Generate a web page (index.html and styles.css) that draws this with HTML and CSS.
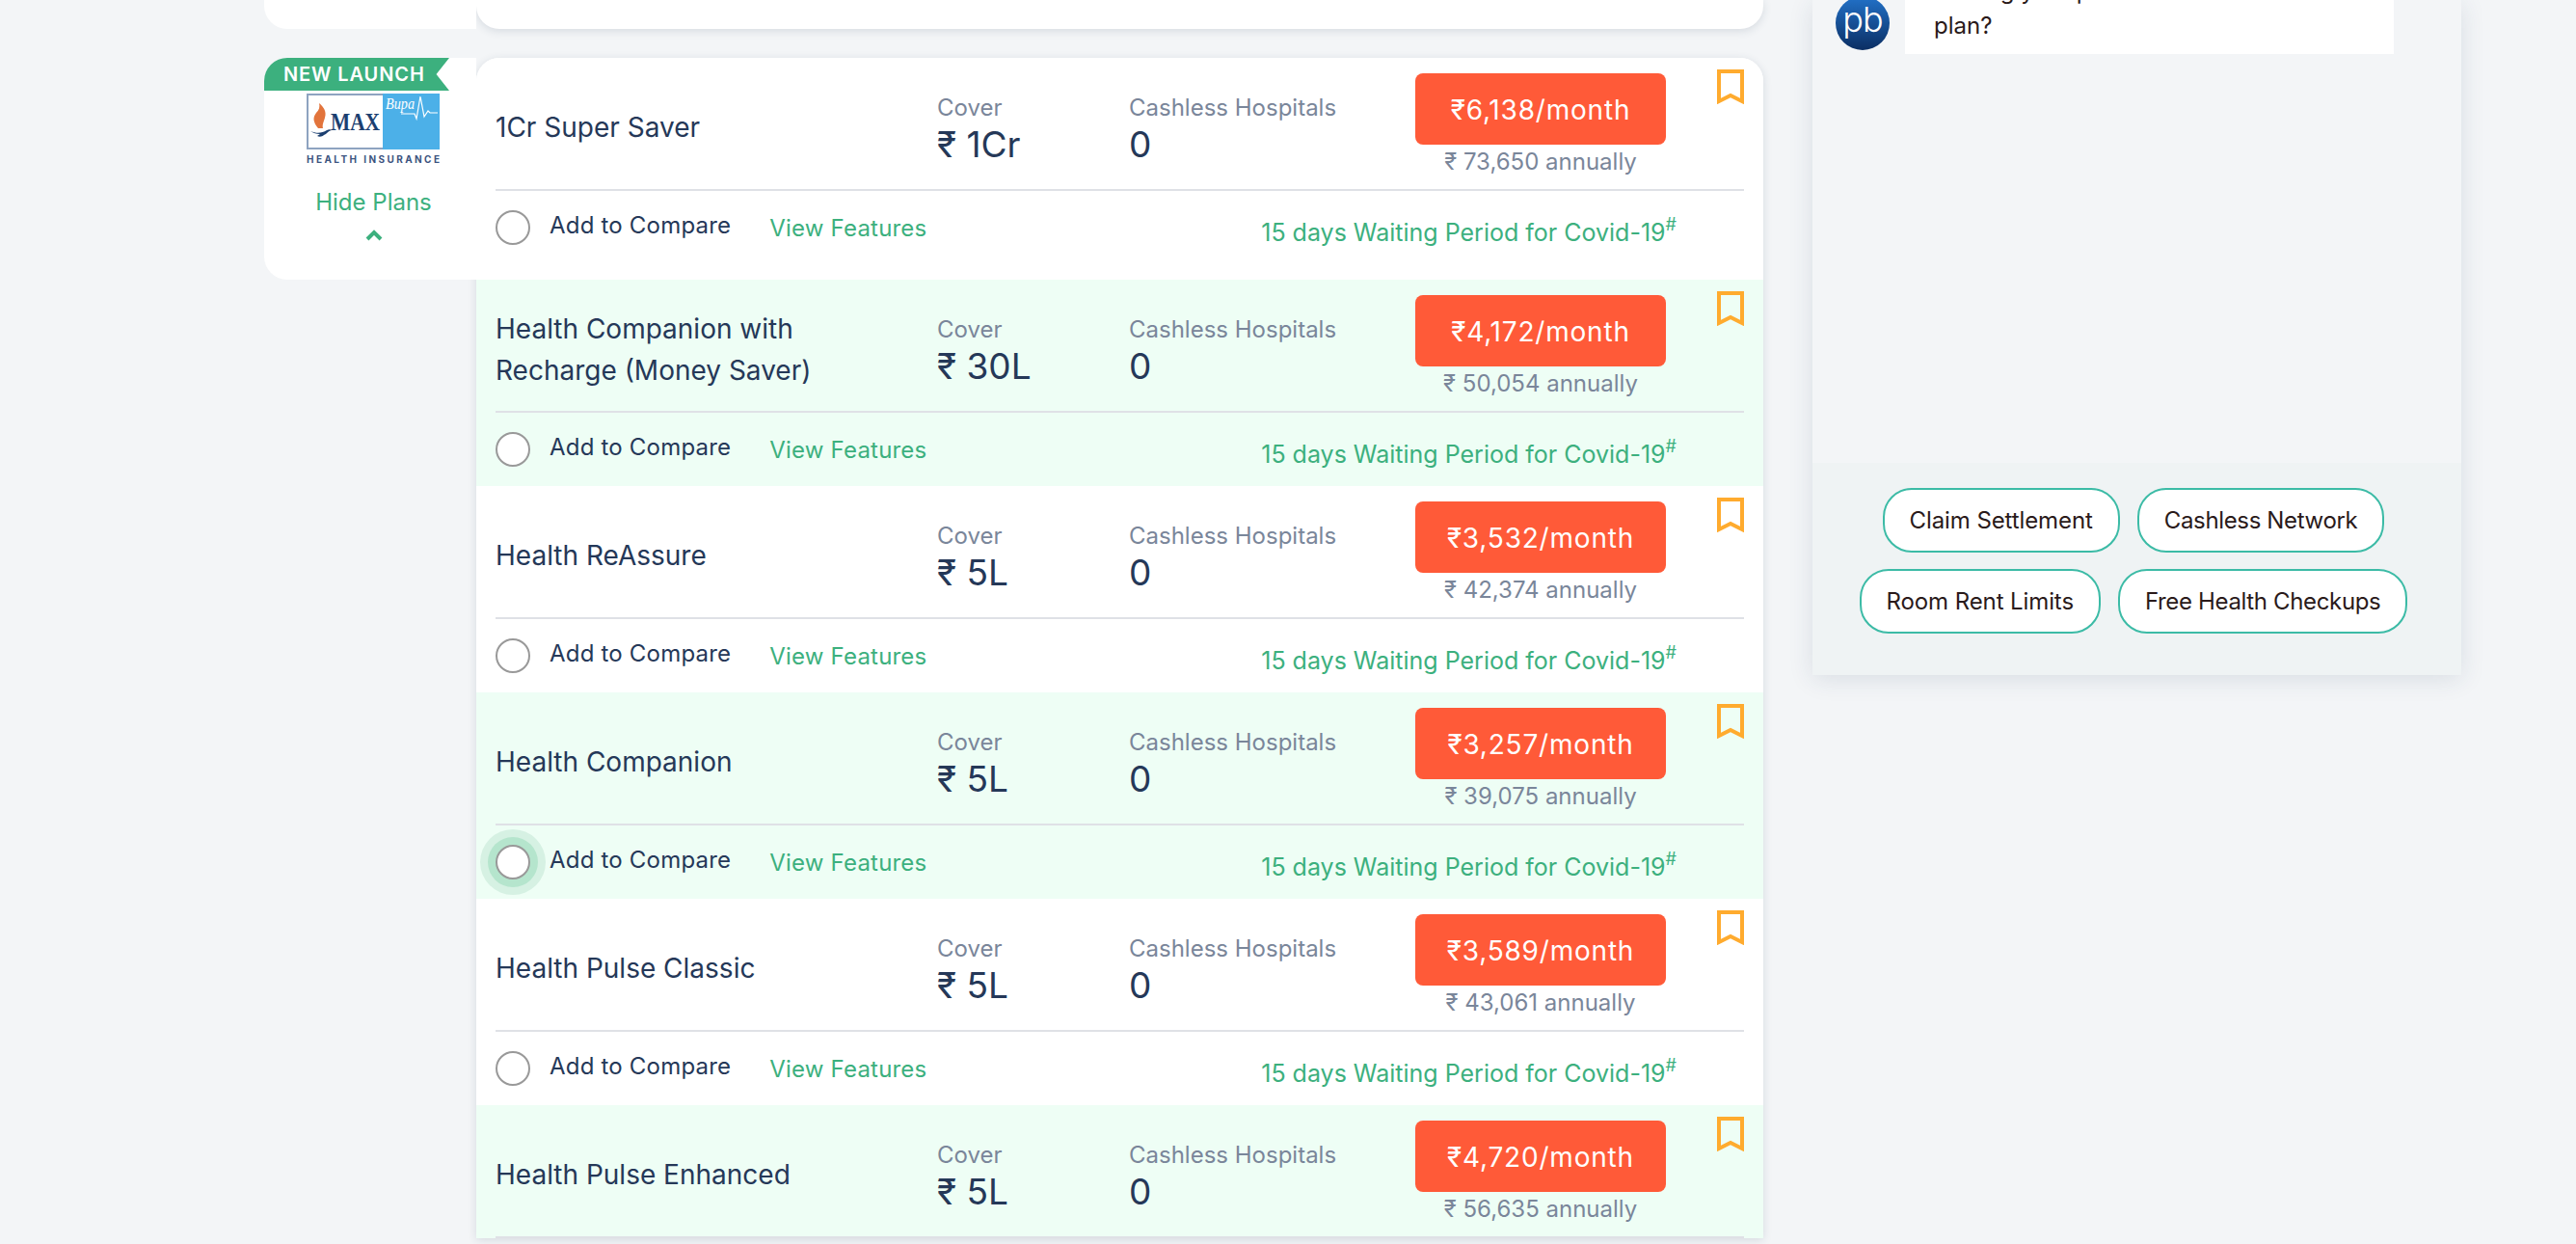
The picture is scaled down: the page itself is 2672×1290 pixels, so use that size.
FILE: index.html
```html
<!DOCTYPE html>
<html lang="en">
  <head>
    <meta charset="UTF-8" />
    <title>Health Insurance Plans</title>
    <link rel="stylesheet" href="styles.css">
  </head>
  <body>
    <div class="page">
      <div class="results">
        <div class="plan-group prev-group">
          <div class="insurer-panel"></div>
          <div class="plan-list"></div>
        </div>

        <div class="plan-group">
          <div class="insurer-panel">
            <div class="launch-tag">NEW LAUNCH</div>
            <svg class="insurer-logo" width="138" height="73" viewBox="0 0 138 73">
              <rect x="1" y="1" width="79" height="56" fill="#fff" stroke="#8ea3c0" stroke-width="2"/>
              <rect x="79" y="0" width="59" height="58" fill="#4cb0e8"/>
              <path d="M12 36c-5-6-6-11-2-16 3-3 4-6 3-10 5 4 8 9 6 15-1 4-3 7-2 11z" fill="#e2743c"/>
              <path d="M4 39c7 3 12 2 17-1 2-1 4-1 5 0-4 1-5 4-8 5-2 2-5 2-7 1l3-2c-4 0-7-1-10-3z" fill="#1c3f70"/>
              <text x="25" y="38" textLength="51" lengthAdjust="spacingAndGlyphs" class="logo-max">MAX</text>
              <text x="82" y="16" textLength="30" lengthAdjust="spacingAndGlyphs" class="logo-bupa">Bupa</text>
              <path d="M98 21h14l2 5 4-23 4 21 4-6 2 2h8" fill="none" stroke="#fff" stroke-width="1.2"/>
              <text x="0" y="72" textLength="138" class="logo-health">HEALTH INSURANCE</text>
            </svg>
            <div class="hide-plans">Hide Plans</div>
            <svg class="hide-chevron" width="18" height="12" viewBox="0 0 18 12">
              <path d="M2 10l7-7 7 7" fill="none" stroke="#3cb07e" stroke-width="4"/>
            </svg>
          </div>

          <div class="plan-list">
            <div class="plan-row">
              <div class="plan-top">
                <div class="plan-name">1Cr Super Saver</div>
                <div class="plan-cover"><span class="stat-label">Cover</span><span class="stat-value">₹ 1Cr</span></div>
                <div class="plan-cash"><span class="stat-label">Cashless Hospitals</span><span class="stat-value">0</span></div>
                <div class="plan-price"><button class="price-btn">₹6,138/month</button><span class="annual">₹ 73,650 annually</span></div>
                <svg class="bookmark" width="28" height="36" viewBox="0 0 28 36"><path d="M2 2h24v31l-12-6-12 6z" fill="none" stroke="#ffab2e" stroke-width="4"/></svg>
              </div>
              <div class="plan-bottom">
                <span class="radio"></span>
                <span class="compare">Add to Compare</span>
                <span class="features">View Features</span>
                <span class="waiting">15 days Waiting Period for Covid-19<sup>#</sup></span>
              </div>
            </div>

            <div class="plan-row green">
              <div class="plan-top">
                <div class="plan-name">Health Companion with Recharge (Money Saver)</div>
                <div class="plan-cover"><span class="stat-label">Cover</span><span class="stat-value">₹ 30L</span></div>
                <div class="plan-cash"><span class="stat-label">Cashless Hospitals</span><span class="stat-value">0</span></div>
                <div class="plan-price"><button class="price-btn">₹4,172/month</button><span class="annual">₹ 50,054 annually</span></div>
                <svg class="bookmark" width="28" height="36" viewBox="0 0 28 36"><path d="M2 2h24v31l-12-6-12 6z" fill="none" stroke="#ffab2e" stroke-width="4"/></svg>
              </div>
              <div class="plan-bottom">
                <span class="radio"></span>
                <span class="compare">Add to Compare</span>
                <span class="features">View Features</span>
                <span class="waiting">15 days Waiting Period for Covid-19<sup>#</sup></span>
              </div>
            </div>

            <div class="plan-row">
              <div class="plan-top">
                <div class="plan-name">Health ReAssure</div>
                <div class="plan-cover"><span class="stat-label">Cover</span><span class="stat-value">₹ 5L</span></div>
                <div class="plan-cash"><span class="stat-label">Cashless Hospitals</span><span class="stat-value">0</span></div>
                <div class="plan-price"><button class="price-btn">₹3,532/month</button><span class="annual">₹ 42,374 annually</span></div>
                <svg class="bookmark" width="28" height="36" viewBox="0 0 28 36"><path d="M2 2h24v31l-12-6-12 6z" fill="none" stroke="#ffab2e" stroke-width="4"/></svg>
              </div>
              <div class="plan-bottom">
                <span class="radio"></span>
                <span class="compare">Add to Compare</span>
                <span class="features">View Features</span>
                <span class="waiting">15 days Waiting Period for Covid-19<sup>#</sup></span>
              </div>
            </div>

            <div class="plan-row green">
              <div class="plan-top">
                <div class="plan-name">Health Companion</div>
                <div class="plan-cover"><span class="stat-label">Cover</span><span class="stat-value">₹ 5L</span></div>
                <div class="plan-cash"><span class="stat-label">Cashless Hospitals</span><span class="stat-value">0</span></div>
                <div class="plan-price"><button class="price-btn">₹3,257/month</button><span class="annual">₹ 39,075 annually</span></div>
                <svg class="bookmark" width="28" height="36" viewBox="0 0 28 36"><path d="M2 2h24v31l-12-6-12 6z" fill="none" stroke="#ffab2e" stroke-width="4"/></svg>
              </div>
              <div class="plan-bottom">
                <span class="radio hovered"></span>
                <span class="compare">Add to Compare</span>
                <span class="features">View Features</span>
                <span class="waiting">15 days Waiting Period for Covid-19<sup>#</sup></span>
              </div>
            </div>

            <div class="plan-row">
              <div class="plan-top">
                <div class="plan-name">Health Pulse Classic</div>
                <div class="plan-cover"><span class="stat-label">Cover</span><span class="stat-value">₹ 5L</span></div>
                <div class="plan-cash"><span class="stat-label">Cashless Hospitals</span><span class="stat-value">0</span></div>
                <div class="plan-price"><button class="price-btn">₹3,589/month</button><span class="annual">₹ 43,061 annually</span></div>
                <svg class="bookmark" width="28" height="36" viewBox="0 0 28 36"><path d="M2 2h24v31l-12-6-12 6z" fill="none" stroke="#ffab2e" stroke-width="4"/></svg>
              </div>
              <div class="plan-bottom">
                <span class="radio"></span>
                <span class="compare">Add to Compare</span>
                <span class="features">View Features</span>
                <span class="waiting">15 days Waiting Period for Covid-19<sup>#</sup></span>
              </div>
            </div>

            <div class="plan-row green">
              <div class="plan-top">
                <div class="plan-name">Health Pulse Enhanced</div>
                <div class="plan-cover"><span class="stat-label">Cover</span><span class="stat-value">₹ 5L</span></div>
                <div class="plan-cash"><span class="stat-label">Cashless Hospitals</span><span class="stat-value">0</span></div>
                <div class="plan-price"><button class="price-btn">₹4,720/month</button><span class="annual">₹ 56,635 annually</span></div>
                <svg class="bookmark" width="28" height="36" viewBox="0 0 28 36"><path d="M2 2h24v31l-12-6-12 6z" fill="none" stroke="#ffab2e" stroke-width="4"/></svg>
              </div>
            </div>
          </div>
        </div>
      </div>

      <aside class="chat">
        <div class="chat-log">
          <div class="chat-msg">
            <div class="avatar">pb</div>
            <div class="bubble">Finding your perfect<br>plan?</div>
          </div>
        </div>
        <div class="chips">
          <div class="chip-row">
            <span class="chip">Claim Settlement</span>
            <span class="chip narrow">Cashless Network</span>
          </div>
          <div class="chip-row">
            <span class="chip">Room Rent Limits</span>
            <span class="chip narrow">Free Health Checkups</span>
          </div>
        </div>
      </aside>
    </div>
  </body>
</html>
```

FILE: styles.css
```css
html, body {
  height: 100%;
}
body {
  margin: 0;
  overflow: hidden;
  background: #f3f5f7;
  font-family: Inter, "Noto Sans", sans-serif;
  color: #253858;
}
.page {
  display: flex;
  align-items: flex-start;
  height: 1290px;
  padding-left: 274px;
  overflow: hidden;
}
.results {
  width: 1555px;
}

/* groups */
.plan-group {
  display: flex;
  align-items: flex-start;
  margin-bottom: 30px;
}
.insurer-panel {
  position: relative;
  flex: none;
  width: 220px;
  height: 230px;
  box-sizing: border-box;
  padding-top: 37px;
  text-align: center;
  background: #fff;
  border-radius: 24px 0 0 24px;
}
.plan-list {
  flex: 1;
  overflow: hidden;
  background: #fff;
  border-radius: 24px 24px 0 0;
  box-shadow: 0 2px 10px rgba(37, 56, 88, 0.14);
}
.prev-group .insurer-panel {
  height: 30px;
  padding: 0;
  border-radius: 0 0 0 24px;
}
.prev-group .plan-list {
  height: 30px;
  border-radius: 0 0 24px 24px;
}

/* insurer */
.launch-tag {
  position: absolute;
  left: 0;
  top: 0;
  width: 192px;
  height: 34px;
  box-sizing: border-box;
  padding: 0 0 0 20px;
  line-height: 34px;
  text-align: left;
  font-size: 20px;
  font-weight: 600;
  letter-spacing: 0.9px;
  color: #fff;
  background: #3cb07e;
  border-radius: 24px 0 0 0;
  clip-path: polygon(0 0, 100% 0, 93% 50%, 100% 100%, 0 100%);
}
.insurer-logo {
  display: block;
  margin-left: 44px;
}
.logo-max {
  font-family: "Liberation Serif", serif;
  font-size: 26px;
  font-weight: 700;
  fill: #1c3f70;
}
.logo-bupa {
  font-family: "Liberation Serif", serif;
  font-size: 16px;
  font-style: italic;
  fill: #fff;
}
.logo-health {
  font-size: 10px;
  font-weight: 700;
  fill: #3c5480;
}
.hide-plans {
  margin-top: 26px;
  padding-left: 7px;
  font-size: 24px;
  line-height: 27px;
  color: #3cb07e;
}
.hide-chevron {
  display: block;
  margin: 15px auto 0;
  padding-left: 7px;
}

/* plan rows */
.plan-row {
  background: #fff;
}
.plan-row:first-child {
  padding-bottom: 16px;
}
.plan-row.green {
  background: #eefef5;
}
.plan-top {
  display: flex;
  align-items: flex-start;
  height: 136px;
  margin: 0 20px;
  border-bottom: 2px solid #dfe1e6;
}
.plan-name {
  flex: none;
  align-self: center;
  box-sizing: border-box;
  width: 458px;
  padding: 9px 40px 0 0;
  font-size: 28px;
  line-height: 43px;
}
.plan-cover, .plan-cash {
  flex: none;
  display: flex;
  flex-direction: column;
  padding-top: 37px;
}
.plan-cover {
  width: 199px;
}
.plan-cash {
  width: 297px;
}
.stat-label {
  font-size: 24px;
  line-height: 30px;
  color: #7a869a;
}
.stat-value {
  margin-top: 3px;
  font-size: 37px;
  line-height: 40px;
}
.plan-price {
  flex: none;
  display: flex;
  flex-direction: column;
  align-items: center;
  width: 260px;
  padding-top: 16px;
}
.price-btn {
  width: 260px;
  height: 74px;
  padding-top: 2px;
  border: none;
  border-radius: 8px;
  font-family: inherit;
  font-size: 28px;
  letter-spacing: 0.8px;
  color: #fff;
  background: #ff5a38;
}
.annual {
  margin-top: 4px;
  font-size: 24px;
  line-height: 28px;
  color: #7a869a;
}
.bookmark {
  margin: 12px 0 0 auto;
}
.plan-bottom {
  display: flex;
  align-items: center;
  height: 76px;
  margin: 0 20px;
}
.radio {
  flex: none;
  width: 36px;
  height: 36px;
  box-sizing: border-box;
  background: #fff;
  border: 2px solid #999;
  border-radius: 50%;
}
.radio.hovered {
  box-shadow: 0 0 0 8px #b5e5cd, 0 0 0 16px #d6f1e3;
}
.compare {
  margin: 0 0 6px 20px;
  font-size: 24px;
  letter-spacing: 0.2px;
}
.features {
  margin-left: 40px;
  font-size: 24px;
  letter-spacing: 0.2px;
  color: #3cb07e;
}
.waiting {
  margin: 10px 0 0 auto;
  padding-right: 70px;
  font-size: 25px;
  color: #3cb07e;
}
.waiting sup {
  font-size: 18px;
  line-height: 0;
  vertical-align: 11px;
}

/* chat */
.chat {
  flex: none;
  display: flex;
  flex-direction: column;
  width: 673px;
  height: 700px;
  margin-left: 51px;
  background: #f3f5f7;
  box-shadow: 0 4px 24px rgba(37, 56, 88, 0.12);
}
.chat-log {
  flex: 1;
  overflow: hidden;
}
.chat-msg {
  display: flex;
  align-items: flex-end;
  margin-top: -27px;
  padding-left: 24px;
}
.avatar {
  flex: none;
  width: 56px;
  height: 56px;
  margin-bottom: 4px;
  border-radius: 50%;
  font-size: 36px;
  font-weight: 300;
  letter-spacing: -1px;
  line-height: 48px;
  text-align: center;
  color: #fff;
  background: linear-gradient(#2272c9, #0b2e63);
}
.bubble {
  width: 507px;
  box-sizing: border-box;
  margin-left: 16px;
  padding: 0 30px 11px;
  font-size: 24px;
  line-height: 36px;
  color: #2a1a1a;
  background: #fff;
}
.chips {
  flex: none;
  display: flex;
  flex-direction: column;
  align-items: center;
  gap: 17px;
  height: 220px;
  box-sizing: border-box;
  padding: 26px 7px 0 0;
  background: #eff3f4;
}
.chip-row {
  display: flex;
  gap: 18px;
}
.chip {
  height: 67px;
  box-sizing: border-box;
  padding: 0 26px;
  font-size: 24px;
  letter-spacing: -0.1px;
  line-height: 63px;
  color: #2a1a1a;
  background: #fff;
  border: 2px solid #3cbba6;
  border-radius: 30px;
}
.chip.narrow {
  letter-spacing: -0.35px;
}
```
